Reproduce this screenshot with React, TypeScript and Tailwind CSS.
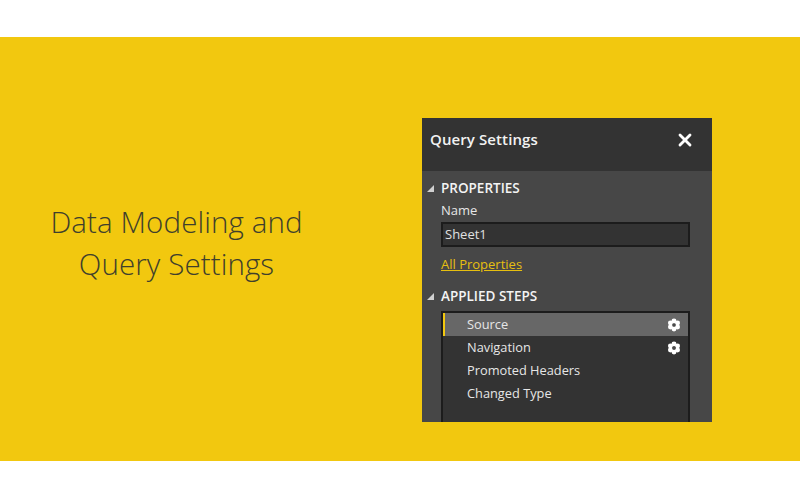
import { X } from 'lucide-react';

const STEPS = [
  { name: 'Source', gear: true, selected: true },
  { name: 'Navigation', gear: true, selected: false },
  { name: 'Promoted Headers', gear: false, selected: false },
  { name: 'Changed Type', gear: false, selected: false },
];

function Gear() {
  return (
    <svg width="14" height="14" viewBox="0 0 13 13" className="text-white">
      <g fill="currentColor">
        <circle cx="6.5" cy="2.7" r="2.3" />
        <circle cx="6.5" cy="10.3" r="2.3" />
        <circle cx="3.2" cy="4.6" r="2.3" />
        <circle cx="9.8" cy="4.6" r="2.3" />
        <circle cx="3.2" cy="8.4" r="2.3" />
        <circle cx="9.8" cy="8.4" r="2.3" />
      </g>
      <circle cx="6.5" cy="6.5" r="1.5" fill="#4a4a4a" />
    </svg>
  );
}

function SectionHeading({ label }: { label: string }) {
  return (
    <div className="flex items-center h-[20px]">
      <svg width="7" height="7" viewBox="0 0 7 7" className="ml-[5px] mr-[7px]">
        <polygon points="7,0 7,7 0,7" fill="#d0d0d0" />
      </svg>
      <span className="text-[13.5px] font-semibold text-[#f4f4f4]">{label}</span>
    </div>
  );
}

export default function App() {
  return (
    <div className="w-[800px] h-[500px] bg-white pt-[37px] overflow-hidden font-['Open_Sans',sans-serif]">
      <div className="h-[424px] bg-[#f2c80f] flex items-start">
        <div className="w-[353px] pt-[164px] text-center text-[29.5px] leading-[42px] font-light text-[#3f3f2c] tracking-[0.1px]">
          <div>Data Modeling and</div>
          <div>Query Settings</div>
        </div>
        <div className="ml-[69px] mt-[81px] w-[290px] h-[304px] bg-[#474747] flex flex-col">
          <div className="h-[53px] shrink-0 bg-[#333333] flex items-start justify-between pl-[8px] pr-[17px] pt-[10px]">
            <span className="text-[15px] font-semibold text-[#f2f2f2] leading-[22px] tracking-[0.1px]">Query Settings</span>
            <X size={20} strokeWidth={3.4} className="text-white mt-[2px]" />
          </div>
          <div className="pt-[7px] flex flex-col flex-1 min-h-0">
            <SectionHeading label="PROPERTIES" />
            <div className="pl-[19px] text-[13px] text-[#e6e6e6] leading-[18px] mt-[3px]">Name</div>
            <div className="ml-[19px] mt-[3px] w-[249px] h-[25px] bg-[#333333] border-2 border-[#1c1c1c] flex items-center pl-[2px] text-[13px] text-[#e0e0e0]">
              Sheet1
            </div>
            <div className="pl-[19px] mt-[8px] text-[13px] leading-[18px] text-[#e6bf10] underline">All Properties</div>
            <div className="mt-[13px]">
              <SectionHeading label="APPLIED STEPS" />
            </div>
            <div className="ml-[19px] mt-[5px] w-[249px] flex-1 min-h-0 bg-[#333333] border-2 border-b-0 border-[#1c1c1c]">
              {STEPS.map(step => (
                <div
                  key={step.name}
                  className={
                    step.selected
                      ? 'h-[23px] flex items-center justify-between pl-[22px] pr-[7px] text-[12.8px] text-[#e6e6e6] bg-[#676767] border-l-2 border-[#f2c80f]'
                      : 'h-[23px] flex items-center justify-between pl-[24px] pr-[7px] text-[12.8px] text-[#e6e6e6]'
                  }
                >
                  <span>{step.name}</span>
                  {step.gear && <Gear />}
                </div>
              ))}
            </div>
          </div>
        </div>
      </div>
    </div>
  );
}
